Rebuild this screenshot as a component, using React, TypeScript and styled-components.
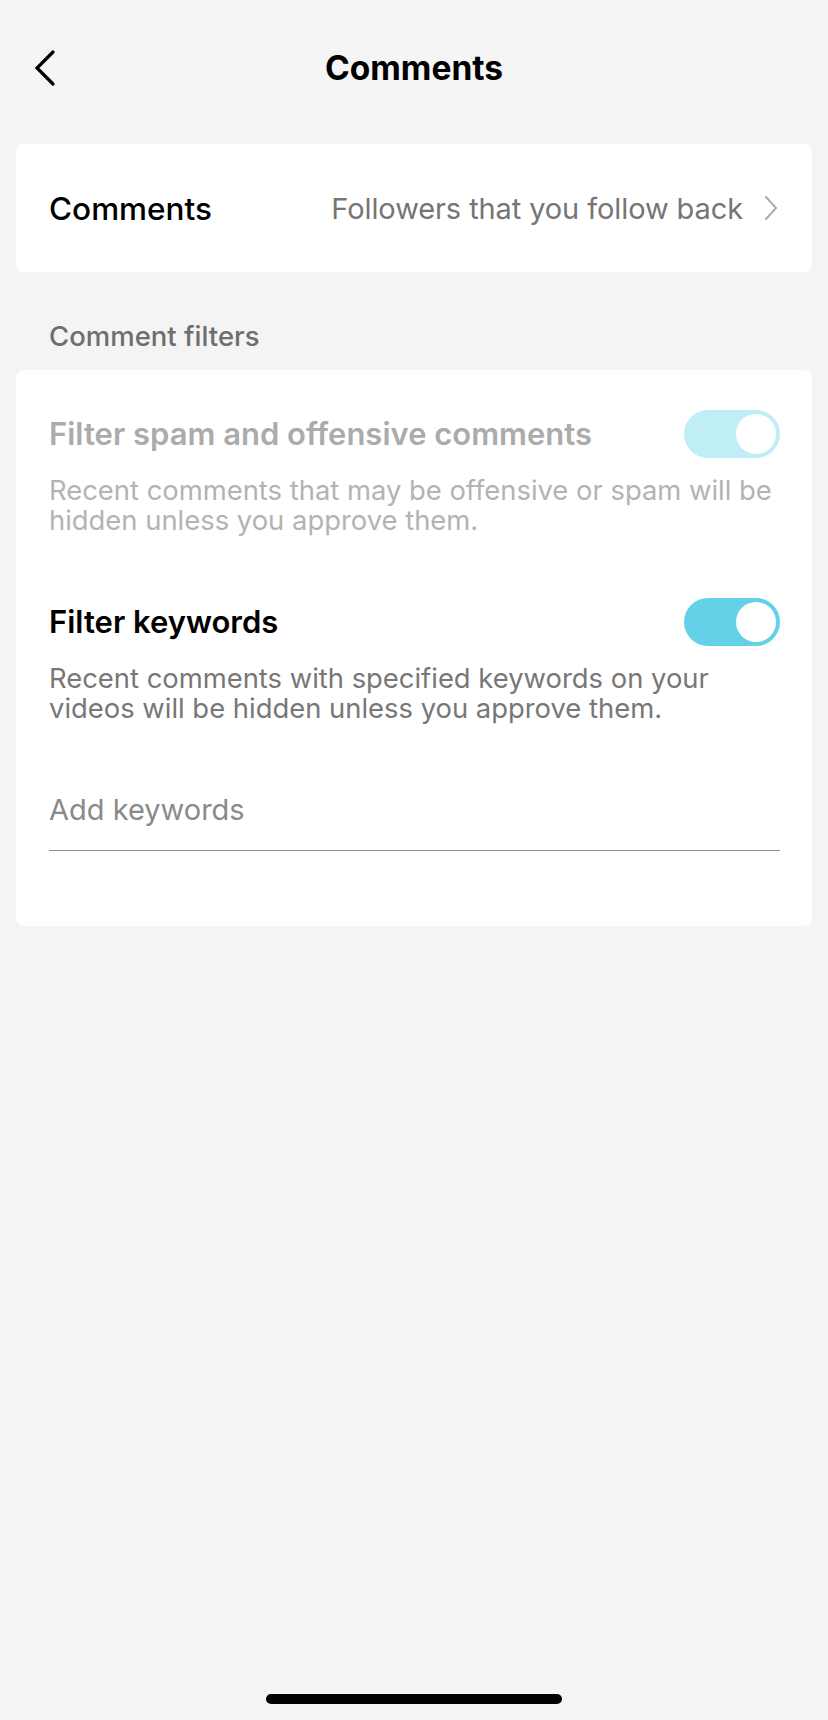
import React from "react";
import styled, { createGlobalStyle } from "styled-components";

const GlobalStyle = createGlobalStyle`
  html, body {
    margin: 0;
    padding: 0;
    background: #f4f4f4;
  }
  body {
    font-family: Inter, "Noto Sans", "Liberation Sans", sans-serif;
    -webkit-font-smoothing: antialiased;
  }
  * { box-sizing: border-box; }
`;

const Page = styled.div`
  min-height: 1720px;
  display: flex;
  flex-direction: column;
  background: #f4f4f4;
`;

const Header = styled.header`
  height: 136px;
  display: grid;
  grid-template-columns: 120px 1fr 120px;
  align-items: center;
  padding: 0 0 0 34px;
  background: #f5f5f5;
`;

const BackButton = styled.button`
  width: 24px;
  height: 40px;
  padding: 0;
  border: none;
  background: transparent;
  display: flex;
  align-items: center;
  justify-content: flex-start;
  cursor: pointer;
`;

const Title = styled.h1`
  margin: 0;
  text-align: center;
  font-size: 33.5px;
  font-weight: 700;
  color: #000;
  letter-spacing: 0;
  transform: translateX(-17px);
`;

const Card = styled.section`
  margin: 0 16px;
  background: #fff;
  border-radius: 8px;
`;

const LinkCard = styled(Card)`
  margin-top: 8px;
  height: 128px;
  display: flex;
  align-items: center;
  justify-content: space-between;
  padding: 0 34px 0 33px;
`;

const RowLabel = styled.span`
  font-size: 31.5px;
  font-weight: 500;
  color: #000;
  letter-spacing: 0;
`;

const RowValue = styled.span`
  display: flex;
  align-items: center;
  gap: 21px;
  font-size: 29px;
  font-weight: 400;
  color: #757575;
  letter-spacing: -0.1px;
`;

const SectionLabel = styled.h2`
  margin: 0;
  padding: 46px 49px 16px;
  font-size: 27.5px;
  line-height: 36px;
  font-weight: 500;
  color: #6e6e6e;
  letter-spacing: 0;
`;

const FilterCard = styled(Card)`
  padding: 40px 32px 75px 33px;
  display: flex;
  flex-direction: column;
`;

const ToggleRow = styled.div<{ $top?: number }>`
  margin-top: ${(p) => p.$top ?? 0}px;
  height: 48px;
  display: flex;
  align-items: center;
  justify-content: space-between;
`;

const FilterTitle = styled.span<{ $disabled?: boolean }>`
  font-size: 31px;
  line-height: 48px;
  font-weight: 600;
  letter-spacing: 0;
  color: ${(p) => (p.$disabled ? "#ababab" : "#000")};
`;

const Description = styled.p<{ $disabled?: boolean }>`
  margin: 18px 0 0;
  font-size: 27.4px;
  line-height: 29.5px;
  font-weight: 400;
  letter-spacing: 0;
  color: ${(p) => (p.$disabled ? "#b3b3b3" : "#777777")};
`;

const Switch = styled.span<{ $on: boolean; $disabled?: boolean }>`
  flex: none;
  width: 96px;
  height: 48px;
  border-radius: 24px;
  padding: 4px;
  display: flex;
  justify-content: ${(p) => (p.$on ? "flex-end" : "flex-start")};
  background: ${(p) => (p.$disabled ? "#c0eef6" : p.$on ? "#63d2e8" : "#e5e5e5")};
`;

const Knob = styled.span`
  width: 40px;
  height: 40px;
  border-radius: 50%;
  background: #fff;
`;

const KeywordField = styled.label`
  margin-top: 66px;
  padding-bottom: 21px;
  border-bottom: 1px solid #8e8e8e;
  display: block;
`;

const KeywordInput = styled.input`
  width: 100%;
  height: 40px;
  padding: 0;
  border: none;
  outline: none;
  background: transparent;
  font-family: inherit;
  font-size: 29px;
  font-weight: 400;
  letter-spacing: 0;
  color: #000;
  &::placeholder {
    color: #8a8a8a;
  }
`;

const HomeIndicator = styled.div`
  margin: auto auto 16px;
  width: 296px;
  height: 10px;
  border-radius: 5px;
  background: #000;
`;

const BackIcon = () => (
  <svg width="22" height="38" viewBox="0 0 22 38" fill="none">
    <polyline
      points="19,3 3,19 19,35"
      stroke="#000"
      strokeWidth="3.2"
      strokeLinecap="round"
      strokeLinejoin="miter"
    />
  </svg>
);

const ChevronRight = () => (
  <svg width="14" height="26" viewBox="0 0 14 26" fill="none">
    <polyline
      points="2,2 12,13 2,24"
      stroke="#ababab"
      strokeWidth="2"
      strokeLinecap="round"
      strokeLinejoin="miter"
    />
  </svg>
);

export default function App() {
  return (
    <>
      <GlobalStyle />
      <Page>
        <Header>
          <BackButton aria-label="Back">
            <BackIcon />
          </BackButton>
          <Title>Comments</Title>
          <span />
        </Header>

        <LinkCard>
          <RowLabel>Comments</RowLabel>
          <RowValue>
            Followers that you follow back
            <ChevronRight />
          </RowValue>
        </LinkCard>

        <SectionLabel>Comment filters</SectionLabel>

        <FilterCard>
          <ToggleRow>
            <FilterTitle $disabled>Filter spam and offensive comments</FilterTitle>
            <Switch $on $disabled>
              <Knob />
            </Switch>
          </ToggleRow>
          <Description $disabled>
            Recent comments that may be offensive or spam will be hidden unless you approve them.
          </Description>

          <ToggleRow $top={63}>
            <FilterTitle>Filter keywords</FilterTitle>
            <Switch $on>
              <Knob />
            </Switch>
          </ToggleRow>
          <Description>
            Recent comments with specified keywords on your videos will be hidden unless you approve them.
          </Description>

          <KeywordField>
            <KeywordInput placeholder="Add keywords" />
          </KeywordField>
        </FilterCard>

        <HomeIndicator />
      </Page>
    </>
  );
}
